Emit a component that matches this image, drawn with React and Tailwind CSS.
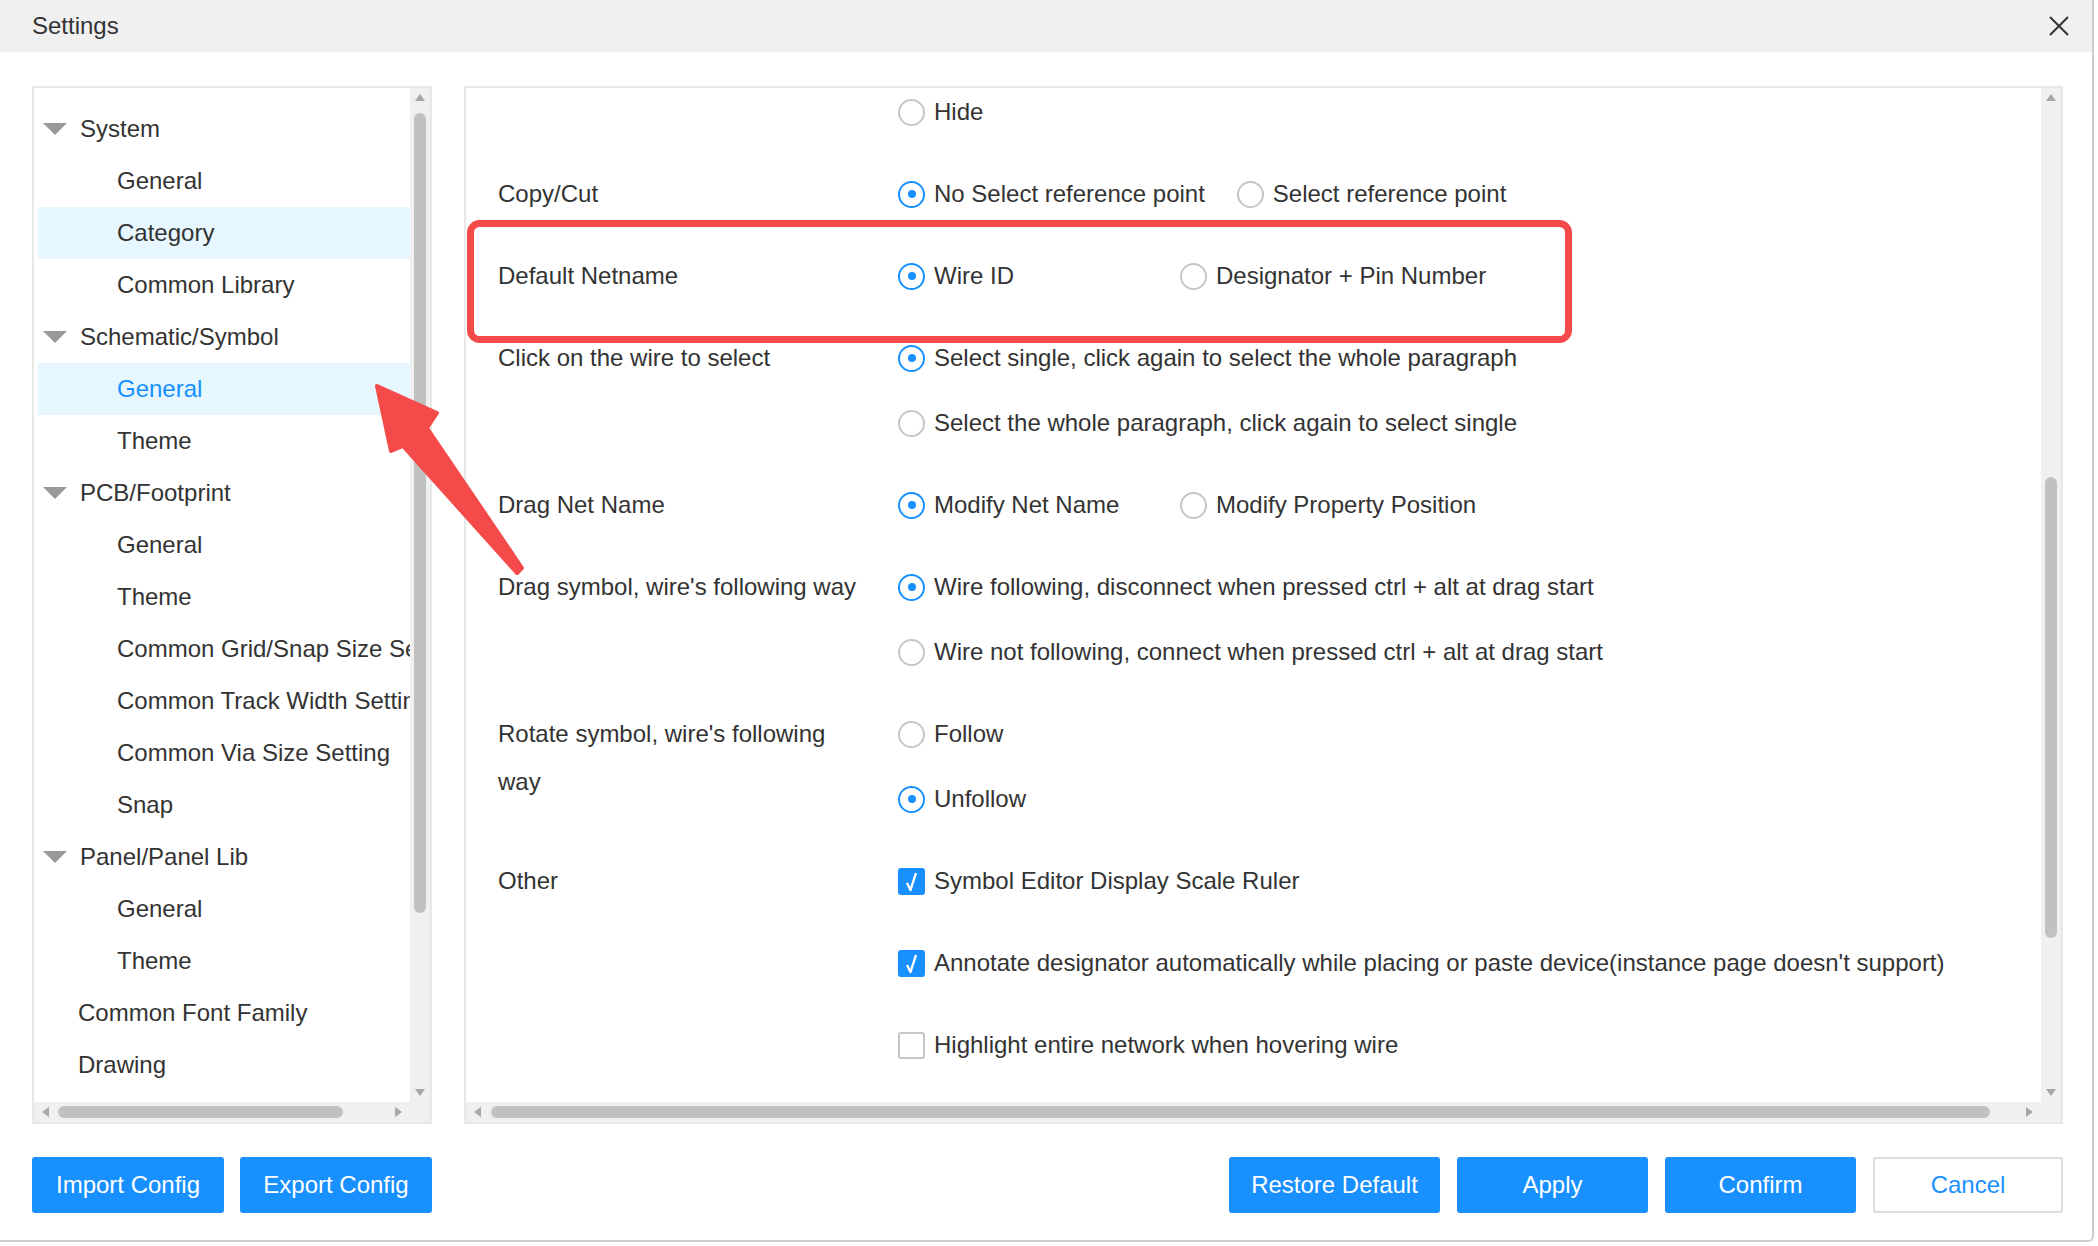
const tree = [
  { t: "System", group: true },
  { t: "General", lvl: 1 },
  { t: "Category", lvl: 1, hover: true },
  { t: "Common Library", lvl: 1 },
  { t: "Schematic/Symbol", group: true },
  { t: "General", lvl: 1, active: true },
  { t: "Theme", lvl: 1 },
  { t: "PCB/Footprint", group: true },
  { t: "General", lvl: 1 },
  { t: "Theme", lvl: 1 },
  { t: "Common Grid/Snap Size Setting", lvl: 1 },
  { t: "Common Track Width Setting", lvl: 1 },
  { t: "Common Via Size Setting", lvl: 1 },
  { t: "Snap", lvl: 1 },
  { t: "Panel/Panel Lib", group: true },
  { t: "General", lvl: 1 },
  { t: "Theme", lvl: 1 },
  { t: "Common Font Family" },
  { t: "Drawing" },
];

const groups = [
  { label: "", lines: [[{ t: "Hide" }]] },
  { label: "Copy/Cut", lines: [[{ t: "No Select reference point", on: true }, { t: "Select reference point" }]] },
  { label: "Default Netname", lines: [[{ t: "Wire ID", on: true }, { t: "Designator + Pin Number" }]] },
  {
    label: "Click on the wire to select",
    lines: [
      [{ t: "Select single, click again to select the whole paragraph", on: true }],
      [{ t: "Select the whole paragraph, click again to select single" }],
    ],
  },
  { label: "Drag Net Name", lines: [[{ t: "Modify Net Name", on: true }, { t: "Modify Property Position" }]] },
  {
    label: "Drag symbol, wire's following way",
    lines: [
      [{ t: "Wire following, disconnect when pressed ctrl + alt at drag start", on: true }],
      [{ t: "Wire not following, connect when pressed ctrl + alt at drag start" }],
    ],
  },
  { label: "Rotate symbol, wire's following way", lines: [[{ t: "Follow" }], [{ t: "Unfollow", on: true }]] },
  {
    label: "Other",
    check: true,
    lines: [
      [{ t: "Symbol Editor Display Scale Ruler", on: true }],
      [{ t: "Annotate designator automatically while placing or paste device(instance page doesn't support)", on: true }],
      [{ t: "Highlight entire network when hovering wire" }],
    ],
  },
];

function Arrow({ dir }) {
  const pts = {
    up: "0,7 5,0 10,7",
    down: "0,0 10,0 5,7",
    left: "7,0 7,10 0,5",
    right: "0,0 0,10 7,5",
  }[dir];
  const vert = dir === "up" || dir === "down";
  return (
    <svg width={vert ? 10 : 7} height={vert ? 7 : 10} className="shrink-0">
      <polygon points={pts} fill="#a6a6a6" />
    </svg>
  );
}

function Radio({ on }) {
  return on ? (
    <span className="w-[27px] h-[27px] rounded-full border-2 border-[#1890ff] flex items-center justify-center shrink-0">
      <span className="w-[8px] h-[8px] rounded-full bg-[#1890ff]" />
    </span>
  ) : (
    <span className="w-[27px] h-[27px] rounded-full border-2 border-[#c6c6c6] shrink-0" />
  );
}

function Check({ on }) {
  return on ? (
    <span className="w-[27px] h-[27px] rounded-[3px] bg-[#1890ff] flex items-center justify-center shrink-0">
      <svg width="18" height="22" viewBox="0 0 18 22">
        <path d="M4 13 L7.5 20 L13 3" fill="none" stroke="white" strokeWidth="2.4" strokeLinejoin="round" />
      </svg>
    </span>
  ) : (
    <span className="w-[27px] h-[27px] rounded-[3px] border-2 border-[#c6c6c6] shrink-0" />
  );
}

function HScroll({ thumbLeft, thumbWidth }) {
  return (
    <div className="h-[20px] bg-[#f0f0f0] flex items-center relative shrink-0">
      <div className="absolute left-[8px] top-[5px]">
        <Arrow dir="left" />
      </div>
      <div className="h-[12px] rounded-full bg-[#c1c1c1] absolute top-[4px]" style={{ left: thumbLeft, width: thumbWidth }} />
      <div className="absolute right-[28px] top-[5px]">
        <Arrow dir="right" />
      </div>
    </div>
  );
}

function VScroll({ thumbTop, thumbHeight }) {
  return (
    <div className="w-[20px] bg-[#f0f0f0] relative shrink-0">
      <div className="absolute left-[5px] top-[6px]">
        <Arrow dir="up" />
      </div>
      <div className="absolute left-[4px] w-[12px] rounded-full bg-[#c1c1c1]" style={{ top: thumbTop, height: thumbHeight }} />
      <div className="absolute left-[5px] bottom-[6px]">
        <Arrow dir="down" />
      </div>
    </div>
  );
}

export default function App() {
  return (
    <div className="w-[2098px] h-[1246px] bg-white relative overflow-hidden font-['Liberation_Sans',Arial,sans-serif] text-[#333]">
      <div className="w-[2094px] h-[1242px] border-r-2 border-b-2 border-[#cdcdcd] rounded-br-[6px] bg-white flex flex-col">
        <div className="h-[52px] bg-[#f0f0f0] flex items-center justify-between pl-[32px] pr-[23px] shrink-0">
          <span className="text-[24px]">Settings</span>
          <svg width="20" height="20" viewBox="0 0 20 20">
            <path d="M1 1 L19 19 M19 1 L1 19" stroke="#333" strokeWidth="2" />
          </svg>
        </div>

        <div className="flex gap-[32px] pl-[32px] pr-[29px] pt-[34px] h-[1072px] shrink-0">
          {/* tree */}
          <div className="w-[400px] border-2 border-[#e8e8e8] flex flex-col">
            <div className="flex flex-1 min-h-0">
              <div className="flex-1 overflow-hidden pt-[15px] pl-[4px]">
                {tree.map((r, i) => (
                  <div
                    key={i}
                    className={`h-[52px] flex items-center whitespace-nowrap text-[24px] ${
                      r.hover || r.active ? "bg-[#e6f7ff]" : ""
                    } ${r.active ? "text-[#1890ff]" : ""}`}
                  >
                    {r.group ? (
                      <>
                        <svg width="24" height="12" className="ml-[5px] shrink-0">
                          <polygon points="0,0 24,0 12,12" fill="#999" />
                        </svg>
                        <span className="ml-[13px]">{r.t}</span>
                      </>
                    ) : (
                      <span className={r.lvl ? "pl-[79px]" : "pl-[40px]"}>{r.t}</span>
                    )}
                  </div>
                ))}
              </div>
              <VScroll thumbTop={25} thumbHeight={800} />
            </div>
            <HScroll thumbLeft={24} thumbWidth={285} />
          </div>

          {/* options */}
          <div className="flex-1 border-2 border-[#e8e8e8] flex flex-col">
            <div className="flex flex-1 min-h-0">
              <div className="flex-1 overflow-hidden pl-[32px] flex flex-col gap-[34px] text-[24px]">
                {groups.map((g, gi) => (
                  <div key={gi} className="flex">
                    <div className="w-[400px] pr-[34px] leading-[48px] shrink-0">{g.label}</div>
                    <div className={`flex flex-col ${g.check ? "gap-[34px]" : "gap-[17px]"}`}>
                      {g.lines.map((line, li) => (
                        <div key={li} className="h-[48px] flex items-center whitespace-nowrap">
                          {line.map((o, oi) => (
                            <div
                              key={oi}
                              className={`flex items-center gap-[9px] ${line.length > 1 && oi === 0 ? "min-w-[250px] mr-[32px]" : ""}`}
                            >
                              {g.check ? <Check on={o.on} /> : <Radio on={o.on} />}
                              <span>{o.t}</span>
                            </div>
                          ))}
                        </div>
                      ))}
                    </div>
                  </div>
                ))}
              </div>
              <VScroll thumbTop={389} thumbHeight={461} />
            </div>
            <HScroll thumbLeft={25} thumbWidth={1499} />
          </div>
        </div>

        <div className="flex justify-between pl-[32px] pr-[29px] mt-[33px] text-[24px]">
          <div className="flex gap-[16px]">
            <button className="w-[192px] h-[56px] rounded-[3px] bg-[#1890ff] text-white">Import Config</button>
            <button className="w-[192px] h-[56px] rounded-[3px] bg-[#1890ff] text-white">Export Config</button>
          </div>
          <div className="flex gap-[17px]">
            <button className="w-[211px] h-[56px] rounded-[3px] bg-[#1890ff] text-white">Restore Default</button>
            <button className="w-[191px] h-[56px] rounded-[3px] bg-[#1890ff] text-white">Apply</button>
            <button className="w-[191px] h-[56px] rounded-[3px] bg-[#1890ff] text-white">Confirm</button>
            <button className="w-[190px] h-[56px] rounded-[3px] border-2 border-[#dcdcdc] bg-white text-[#1890ff]">Cancel</button>
          </div>
        </div>
      </div>

      {/* red annotation */}
      <svg className="absolute left-0 top-0 pointer-events-none" width="2098" height="1246">
        <rect x="470.5" y="223.5" width="1098" height="116" rx="9" fill="none" stroke="#f44b4a" strokeWidth="7" />
        <polygon
          points="377,386 437,413 427,428 522,568 517,573 403,446 391,451"
          fill="#f44b4a"
          stroke="#f44b4a"
          strokeWidth="4"
          strokeLinejoin="round"
        />
      </svg>
    </div>
  );
}
